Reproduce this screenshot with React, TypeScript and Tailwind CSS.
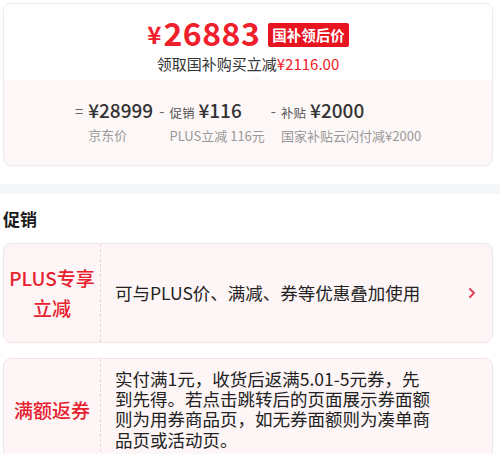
import React from 'react'

const font = "font-['Noto_Sans_CJK_SC','Noto_Sans',sans-serif]"

const Chevron = () => (
  <svg width="8" height="12" viewBox="0 0 8 12" fill="none" xmlns="http://www.w3.org/2000/svg">
    <path d="M2 2L6 6L2 10" stroke="#e0435c" strokeWidth="2" strokeLinecap="round" strokeLinejoin="round" />
  </svg>
)

const PriceCol = ({ sign, label, value, sub }: { sign: string; label?: string; value: string; sub: string }) => {
  return (
    <div className="flex flex-row items-start">
      <span className="text-[15px] leading-[26px] text-[#666] pr-[5px]">{sign}</span>
      <div className="flex flex-col">
        <div className="flex flex-row items-baseline gap-[4px]">
          {label && <span className="text-[12.5px] text-[#555]">{label}</span>}
          <span className="text-[19px] leading-[24px] font-medium text-[#333]">{value}</span>
        </div>
        <span className="text-[13px] leading-[18px] text-[#999] mt-[4px]">{sub}</span>
      </div>
    </div>
  )
}

const App = () => {
  return (
    <div className={`w-[500px] h-[454px] overflow-hidden bg-white ${font}`}>
      <div className="ml-[3px] mt-[3px] w-[490px] rounded-[8px] border border-[#f1e8e8] overflow-hidden">
        <div className="flex flex-col items-center bg-white pt-[10px] h-[76px]">
          <div className="flex flex-row items-end h-[36px]">
            <span className="text-[#f0202b] font-bold text-[24px] leading-[32px] mr-[2px]">¥</span>
            <span className="text-[#f0202b] font-bold text-[32px] leading-[36px] tracking-[0.5px]">26883</span>
            <span className="ml-[8px] mb-[3px] bg-[#e8141f] text-white font-bold text-[14.5px] leading-[24px] px-[4px] rounded-[2px]">国补领后价</span>
          </div>
          <div className="text-[15px] leading-[20px] text-[#333] mt-[4px]">
            领取国补购买立减<span className="text-[#f0202b]">¥2116.00</span>
          </div>
        </div>
        <div className="relative bg-[#fdf7f7] pt-[18px] pb-[20px] flex flex-row justify-center gap-[6px]">
          <div className="absolute left-[244px] -top-[5px] w-0 h-0 border-l-[6px] border-r-[6px] border-b-[5px] border-l-transparent border-r-transparent border-b-[#fdf7f7]" />
          <PriceCol sign="=" value="¥28999" sub="京东价" />
          <PriceCol sign="-" label="促销" value="¥116" sub="PLUS立减 116元" />
          <PriceCol sign="-" label="补贴" value="¥2000" sub="国家补贴云闪付减¥2000" />
        </div>
      </div>

      <div className="mt-[18px] h-[10px] w-full bg-[#f6f7f9]" />

      <h2 className="pl-[3px] pt-[14px] pb-[13px] text-[17px] leading-[22px] font-bold text-[#1a1a1a]">促销</h2>

      <div className="flex flex-col gap-[15px] ml-[3px] w-[490px]">
        <div className="flex flex-row h-[100px] rounded-[8px] border border-[#f3e4e6] bg-[#fdf5f6]">
          <div className="w-[97px] shrink-0 flex items-center justify-center text-center border-r border-dashed border-[#e6d6d8]">
            <span className="text-[19px] leading-[30px] font-medium text-[#e8202e]">PLUS专享<br />立减</span>
          </div>
          <div className="flex-1 flex flex-row items-center pl-[14px] pr-[16px]">
            <span className="flex-1 text-[17.5px] leading-[22px] text-[#222]">可与PLUS价、满减、券等优惠叠加使用</span>
            <Chevron />
          </div>
        </div>

        <div className="flex flex-row rounded-[8px] border border-[#f3e4e6] bg-[#fdf5f6]">
          <div className="w-[97px] shrink-0 flex items-center justify-center text-center border-r border-dashed border-[#e6d6d8]">
            <span className="text-[19px] leading-[30px] font-medium text-[#e8202e]">满额返券</span>
          </div>
          <div className="flex-1 pl-[14px] pr-[56px] pt-[10px] pb-[12px]">
            <p className="text-[17.5px] leading-[20.3px] text-[#222]">
              实付满1元，收货后返满5.01-5元券，先到先得。若点击跳转后的页面展示券面额则为用券商品页，如无券面额则为凑单商品页或活动页。
            </p>
          </div>
        </div>
      </div>
    </div>
  )
}

export default App
